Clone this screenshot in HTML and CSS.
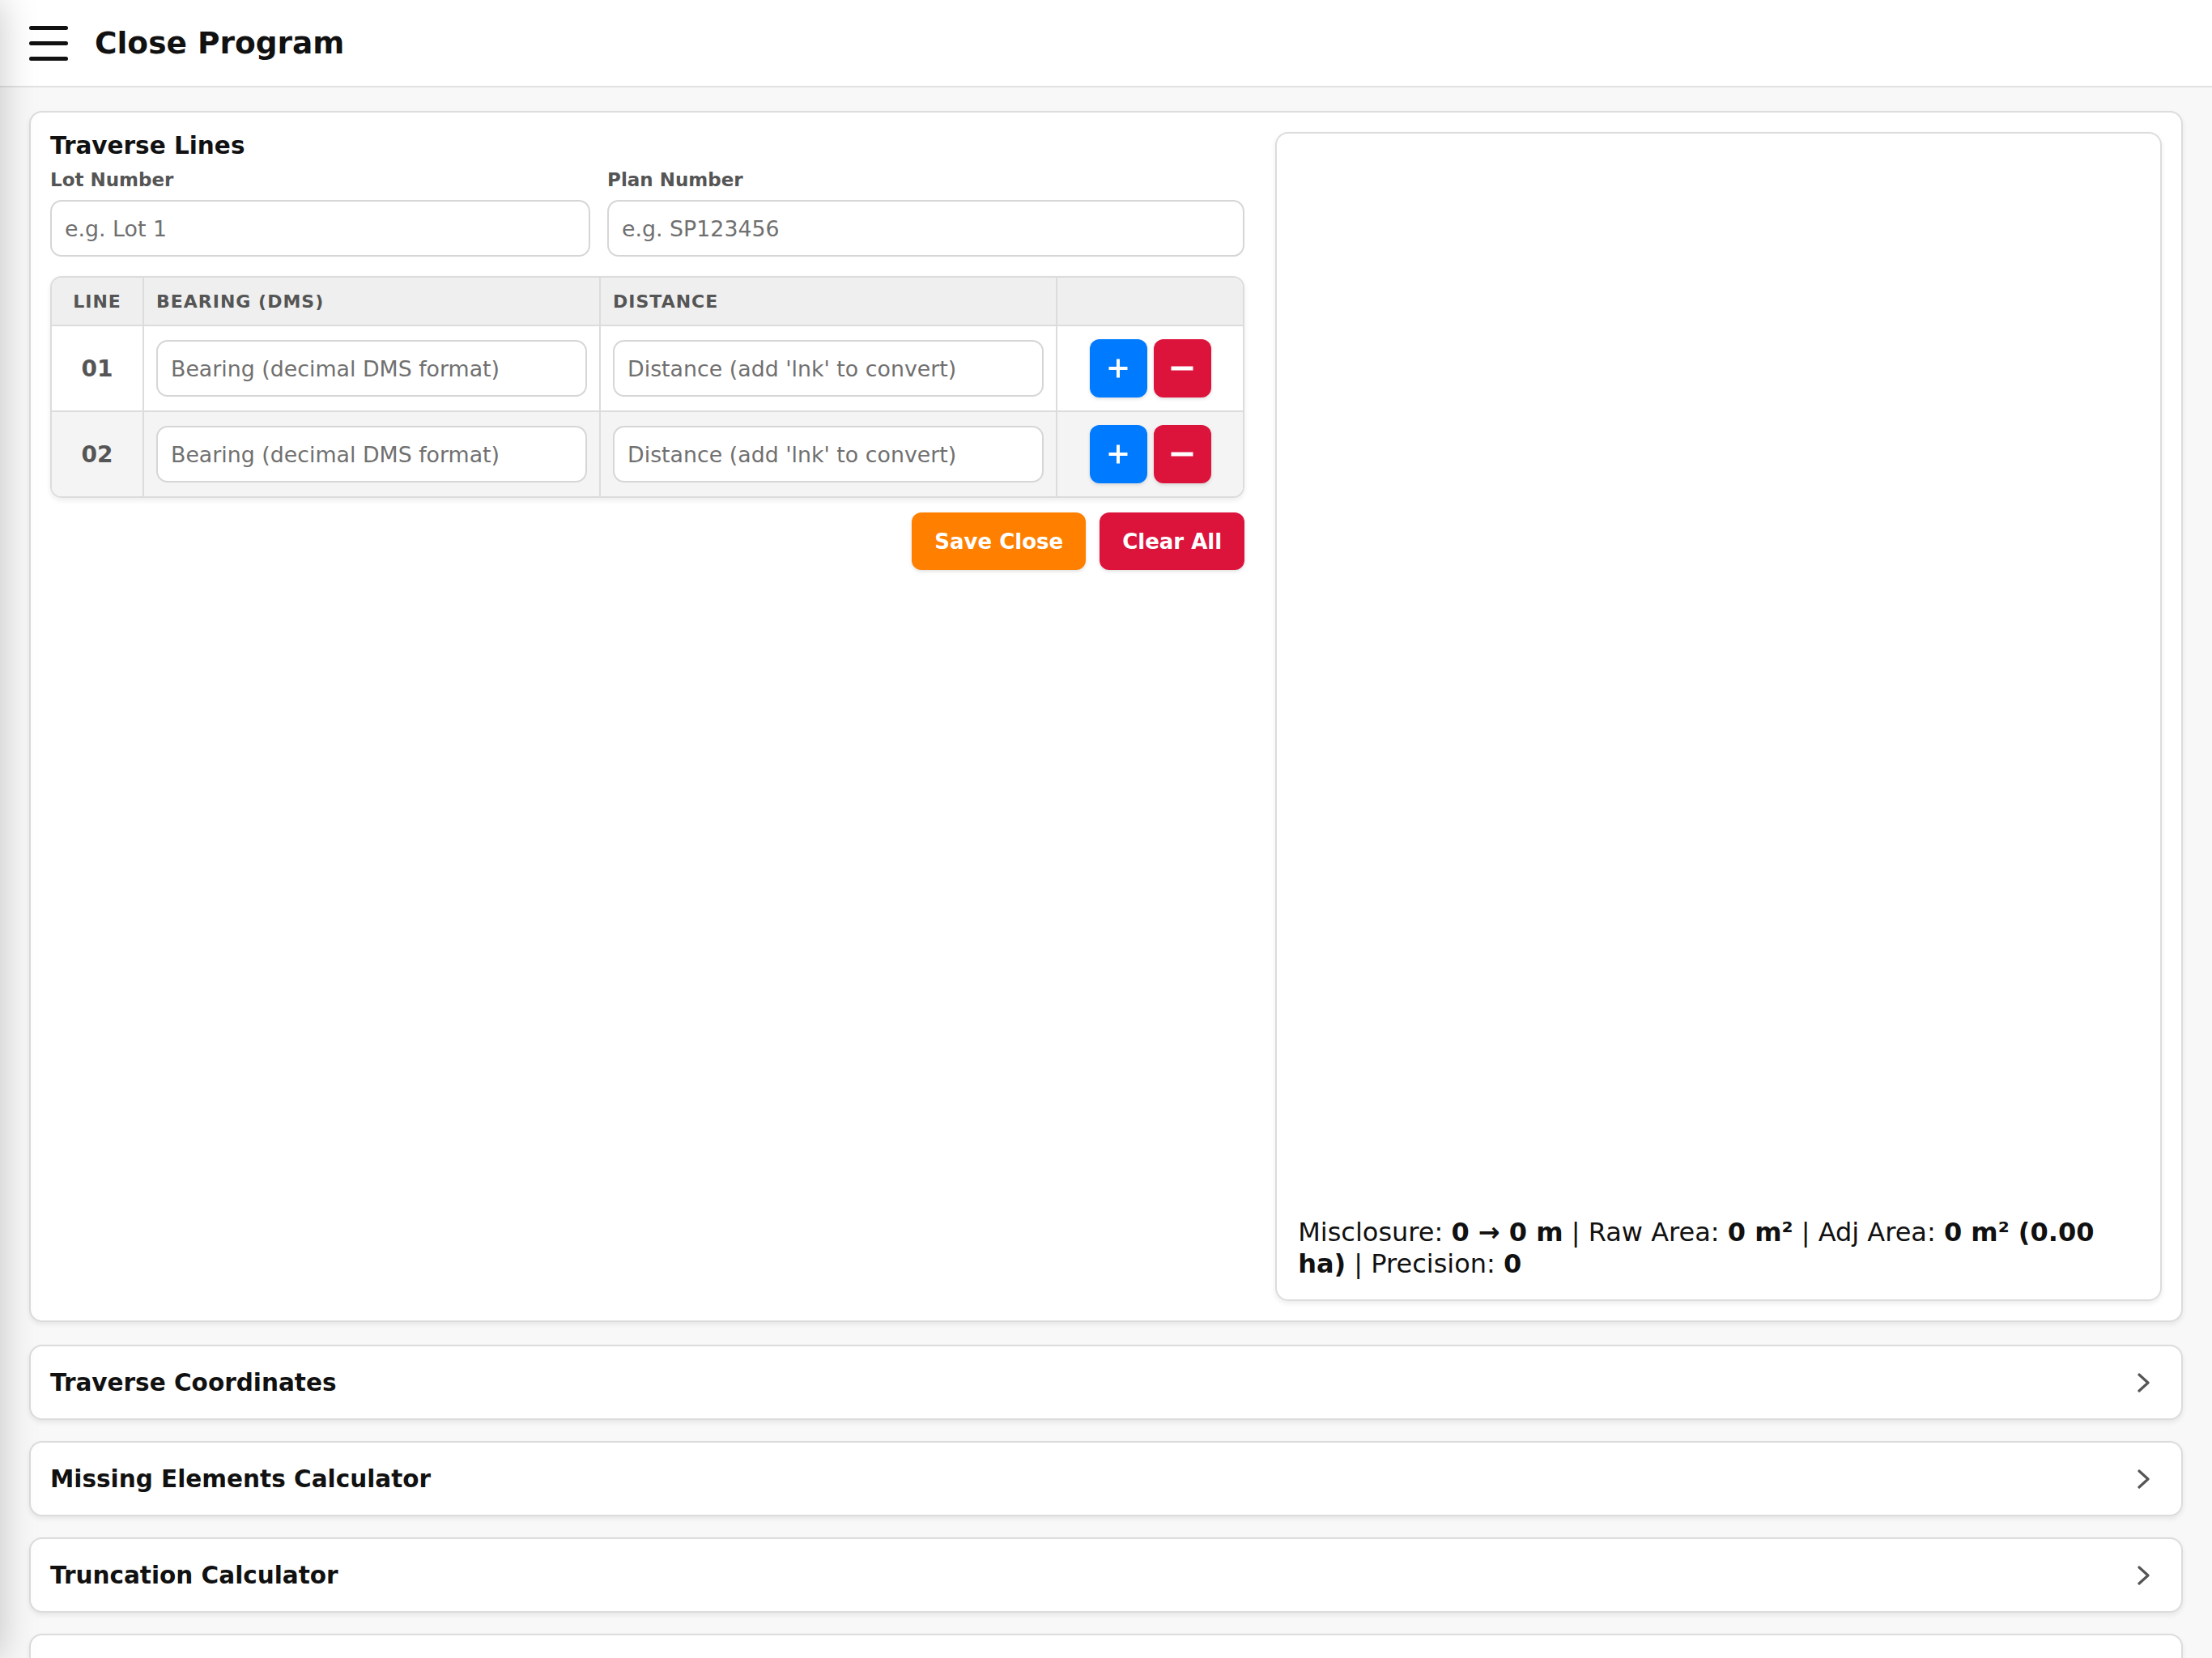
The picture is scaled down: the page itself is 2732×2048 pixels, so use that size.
FILE: index.html
```html
<!DOCTYPE html>
<html lang="en">
<head>
    <meta charset="UTF-8">
    <meta name="viewport" content="width=device-width, initial-scale=1.0">
    <title>Close Program</title>
    <link rel="stylesheet" href="styles.css">
</head>
<body>
    <nav class="drawer"></nav>

    <header class="topbar">
        <button class="menu-btn" aria-label="Menu">
            <span></span><span></span><span></span>
        </button>
        <h1>Close Program</h1>
    </header>

    <main class="container">
        <section class="card main-card">
            <div class="traverse">
                <h2>Traverse Lines</h2>
                <div class="meta-row">
                    <div class="field">
                        <label for="lotNumber">Lot Number</label>
                        <input type="text" id="lotNumber" placeholder="e.g. Lot 1">
                    </div>
                    <div class="field">
                        <label for="planNumber">Plan Number</label>
                        <input type="text" id="planNumber" placeholder="e.g. SP123456">
                    </div>
                </div>

                <table class="lines">
                    <colgroup>
                        <col class="col-line">
                        <col>
                        <col>
                        <col class="col-actions">
                    </colgroup>
                    <thead>
                        <tr>
                            <th class="num">Line</th>
                            <th>Bearing (DMS)</th>
                            <th>Distance</th>
                            <th></th>
                        </tr>
                    </thead>
                    <tbody>
                        <tr>
                            <td class="num">01</td>
                            <td><input type="text" placeholder="Bearing (decimal DMS format)"></td>
                            <td><input type="text" placeholder="Distance (add 'lnk' to convert)"></td>
                            <td class="actions">
                                <button class="icon-btn add" aria-label="Add line">
                                    <svg viewBox="0 0 28 28" width="28" height="28"><path d="M14 2.5v23M2.5 14h23"/></svg>
                                </button>
                                <button class="icon-btn remove" aria-label="Remove line">
                                    <svg viewBox="0 0 28 28" width="28" height="28"><path d="M0.5 14h27"/></svg>
                                </button>
                            </td>
                        </tr>
                        <tr>
                            <td class="num">02</td>
                            <td><input type="text" placeholder="Bearing (decimal DMS format)"></td>
                            <td><input type="text" placeholder="Distance (add 'lnk' to convert)"></td>
                            <td class="actions">
                                <button class="icon-btn add" aria-label="Add line">
                                    <svg viewBox="0 0 28 28" width="28" height="28"><path d="M14 2.5v23M2.5 14h23"/></svg>
                                </button>
                                <button class="icon-btn remove" aria-label="Remove line">
                                    <svg viewBox="0 0 28 28" width="28" height="28"><path d="M0.5 14h27"/></svg>
                                </button>
                            </td>
                        </tr>
                    </tbody>
                </table>

                <div class="form-actions">
                    <button class="btn btn-save">Save Close</button>
                    <button class="btn btn-clear">Clear All</button>
                </div>
            </div>

            <div class="plot-panel">
                <div class="plot"></div>
                <div class="stats">
                    Misclosure: <strong>0 → 0 m</strong> | Raw Area: <strong>0 m²</strong> | Adj Area: <strong>0 m² (0.00 ha)</strong> | Precision: <strong>0</strong>
                </div>
            </div>
        </section>

        <section class="card fold">
            <h2>Traverse Coordinates</h2>
            <svg class="chevron" viewBox="0 0 24 24" width="24" height="24"><path d="M8 2l11 10-11 10"/></svg>
        </section>
        <section class="card fold">
            <h2>Missing Elements Calculator</h2>
            <svg class="chevron" viewBox="0 0 24 24" width="24" height="24"><path d="M8 2l11 10-11 10"/></svg>
        </section>
        <section class="card fold">
            <h2>Truncation Calculator</h2>
            <svg class="chevron" viewBox="0 0 24 24" width="24" height="24"><path d="M8 2l11 10-11 10"/></svg>
        </section>
        <section class="card fold">
            <h2>Area Subdivision</h2>
            <svg class="chevron" viewBox="0 0 24 24" width="24" height="24"><path d="M8 2l11 10-11 10"/></svg>
        </section>
    </main>
</body>
</html>
```

FILE: styles.css
```css
* {
    box-sizing: border-box;
}
body {
    margin: 0;
    font-family: "DejaVu Sans", Verdana, sans-serif;
    background-color: #f8f8f8;
    color: #111;
}
.drawer {
    position: fixed;
    top: 0;
    left: 0;
    width: 320px;
    height: 100%;
    background: white;
    transform: translateX(-100%);
    box-shadow: 0 0 44px rgba(0,0,0,0.22);
    z-index: 10;
}
.topbar {
    display: flex;
    align-items: center;
    gap: 33px;
    height: 108px;
    padding: 0 36px;
    background: white;
    border-bottom: 2px solid #e2e2e2;
}
.topbar h1 {
    margin: 0;
    font-size: 37.5px;
    font-weight: bold;
}
.menu-btn {
    display: flex;
    flex-direction: column;
    justify-content: space-between;
    width: 48px;
    height: 43px;
    padding: 0;
    border: none;
    background: none;
}
.menu-btn span {
    display: block;
    height: 5px;
    border-radius: 3px;
    background: #111;
}
.container {
    padding: 29px 36px 0;
}
.card {
    background: white;
    border: 2px solid #dcdcdc;
    border-radius: 16px;
    box-shadow: 0 3px 6px rgba(0,0,0,0.08);
    margin-bottom: 26px;
}
.main-card {
    display: grid;
    grid-template-columns: 1474fr 1094fr;
    gap: 38px;
    padding: 24px;
    margin-bottom: 28px;
}
h2 {
    margin: 0;
    font-size: 29.5px;
    line-height: 34px;
}
.meta-row {
    display: grid;
    grid-template-columns: 667fr 787fr;
    gap: 21px;
    margin-top: 11px;
}
label {
    display: block;
    font-size: 23px;
    line-height: 28px;
    font-weight: bold;
    color: #555;
    margin-bottom: 11px;
}
input[type="text"] {
    width: 100%;
    height: 70px;
    padding: 0 16px;
    border: 2px solid #d6d6d6;
    border-radius: 14px;
    font-family: inherit;
    font-size: 26.8px;
    color: #111;
    background: white;
}
input::placeholder {
    color: #707070;
}
.lines {
    width: 100%;
    margin-top: 24px;
    table-layout: fixed;
    border-collapse: separate;
    border-spacing: 0;
    border: 2px solid #dcdcdc;
    border-radius: 14px;
    overflow: hidden;
    box-shadow: 0 3px 6px rgba(0,0,0,0.08);
}
.col-line {
    width: 112px;
}
.col-actions {
    width: 231px;
}
.lines th {
    height: 60px;
    padding: 0 15px;
    text-align: left;
    font-size: 22px;
    letter-spacing: 1px;
    text-transform: uppercase;
    color: #555;
    background: #efefef;
    border-bottom: 2px solid #dcdcdc;
}
.lines td {
    padding: 16px 15px;
    border-top: 2px solid #dcdcdc;
}
.lines th + th, .lines td + td {
    border-left: 2px solid #dcdcdc;
}
.lines tbody tr:first-child td {
    border-top: none;
}
.lines tbody tr:nth-child(even) {
    background: #f4f4f4;
}
.lines .num {
    text-align: center;
    padding: 0;
}
.lines td.num {
    font-size: 28px;
    font-weight: bold;
    color: #555;
}
.lines td.actions {
    text-align: center;
    font-size: 0;
    padding: 16px 0;
}
.icon-btn {
    display: inline-flex;
    align-items: center;
    justify-content: center;
    width: 71px;
    height: 72px;
    margin: 0 4px;
    padding: 0;
    border: none;
    border-radius: 12px;
    vertical-align: middle;
    box-shadow: 0 2px 4px rgba(0,0,0,0.12);
}
.icon-btn svg {
    fill: none;
    stroke: white;
    stroke-width: 4;
}
.icon-btn.remove svg {
    stroke-width: 5;
}
.add {
    background: #007bff;
}
.remove {
    background: #dc143c;
}
.form-actions {
    display: flex;
    justify-content: flex-end;
    gap: 17px;
    margin-top: 18px;
}
.btn {
    height: 71px;
    padding: 0 28px;
    border: none;
    border-radius: 12px;
    font-family: inherit;
    font-size: 26px;
    font-weight: bold;
    color: white;
    box-shadow: 0 2px 4px rgba(0,0,0,0.12);
}
.btn-save {
    background: #ff8000;
}
.btn-clear {
    background: #dc143c;
}
.plot-panel {
    display: flex;
    flex-direction: column;
    min-height: 1444px;
    padding: 26px 26px 24px;
    border: 2px solid #dcdcdc;
    border-radius: 16px;
    box-shadow: 0 3px 6px rgba(0,0,0,0.08);
}
.plot {
    flex: 1;
}
.stats {
    font-size: 32px;
    line-height: 39px;
    padding-right: 20px;
}
.fold {
    display: flex;
    align-items: center;
    justify-content: space-between;
    height: 93px;
    padding: 0 36px 0 24px;
}
.chevron {
    fill: none;
    stroke: #555;
    stroke-width: 3.2;
    stroke-linecap: round;
    stroke-linejoin: round;
}
```
